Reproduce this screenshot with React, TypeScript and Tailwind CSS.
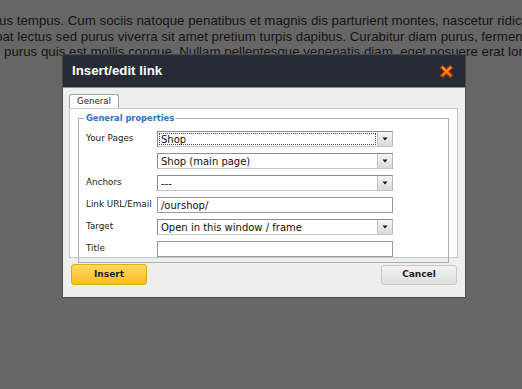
import React from "react";

const formFont = { fontFamily: '"DejaVu Sans", Verdana, sans-serif' };

function Arrow() {
  return (
    <div className="flex h-full w-[15px] items-center justify-center border-l border-[#c2c2c2] bg-gradient-to-b from-[#f7f7f7] to-[#dadada]">
      <svg width="6" height="4" viewBox="0 0 6 4">
        <path d="M0.5 0.5 L5.5 0.5 L3 3.5 Z" fill="#111" />
      </svg>
    </div>
  );
}

function Select({ value, focused }: { value: string; focused?: boolean }) {
  return (
    <div className="flex h-[16px] w-[236px] items-stretch border border-t-[#8c8c8c] border-l-[#8c8c8c] border-r-[#b8b8b8] border-b-[#c4c4c4] bg-white">
      <div className="relative flex flex-1 items-center pl-[3px] text-[10px] text-[#111]" style={formFont}>
        {focused && <div className="absolute inset-[1px] border border-dotted border-[#444]" />}
        <span className="relative">{value}</span>
      </div>
      <Arrow />
    </div>
  );
}

function Input({ value }: { value?: string }) {
  return (
    <div className="flex h-[16px] w-[236px] items-center border border-[#9a9a9a] bg-white pl-[3px] text-[10px] text-[#111]" style={formFont}>
      {value}
    </div>
  );
}

function Row({ label, children }: { label?: string; children: React.ReactNode }) {
  return (
    <div className="flex h-[16px] items-center">
      <div className="w-[71px] text-[8.8px] text-[#222]" style={formFont}>
        {label}
      </div>
      {children}
    </div>
  );
}

function CloseIcon() {
  return (
    <svg width="15" height="15" viewBox="0 0 14 14">
      <defs>
        <linearGradient id="cx" x1="0" y1="0" x2="0" y2="1">
          <stop offset="0" stopColor="#ffb43a" />
          <stop offset="1" stopColor="#ff6400" />
        </linearGradient>
      </defs>
      <path
        d="M1.5 3.5 L3.5 1.5 L7 5 L10.5 1.5 L12.5 3.5 L9 7 L12.5 10.5 L10.5 12.5 L7 9 L3.5 12.5 L1.5 10.5 L5 7 Z"
        fill="url(#cx)"
        stroke="#b8400a"
        strokeWidth="1"
        strokeLinejoin="round"
      />
    </svg>
  );
}

export default function App() {
  const bgFont = { fontFamily: '"Liberation Sans", Arial, sans-serif' };
  return (
    <div className="relative h-[389px] w-[522px] overflow-hidden bg-[#666666]">
      <div className="pt-[13px] text-[13.3px] leading-[15.5px] text-[#151515] whitespace-nowrap" style={bgFont}>
        <div className="ml-[-1px]">us tempus. Cum sociis natoque penatibus et magnis dis parturient montes, nascetur ridiculus mus.</div>
        <div className="ml-[-5px]">pat lectus sed purus viverra sit amet pretium turpis dapibus. Curabitur diam purus, fermentum</div>
        <div className="ml-[4px]">purus quis est mollis congue. Nullam pellentesque venenatis diam, eget posuere erat lorem</div>
      </div>

      <div className="absolute left-[62px] top-[54px] w-[404px] border border-[#4a4a4a] bg-[#eeeeee]">
        <div className="flex h-[33px] items-center justify-between border-b border-[#8e8e8e] bg-[#262b36] pl-[9px] pr-[11px]">
          <span className="text-[13.3px] font-bold text-white" style={bgFont}>
            Insert/edit link
          </span>
          <CloseIcon />
        </div>

        <div className="px-[6px] pt-[6px]">
          <div className="flex">
            <div
              className="flex h-[14px] w-[50px] items-center justify-center rounded-t-[3px] border border-b-0 border-[#94a9b6] bg-white text-[8.6px] text-[#1a1a1a]"
              style={formFont}
            >
              General
            </div>
          </div>
          <div className="mr-px h-[150px] border border-[#c3cbce] bg-white px-[8px] pt-[4px]">
            <fieldset className="h-[150px] border border-[#a9b1b1] pl-[5px] pr-[8px]">
              <legend className="px-[2px] text-[8.3px] font-bold leading-[10px] text-[#2a73c5]" style={formFont}>
                General properties
              </legend>
              <div className="flex flex-col gap-[6px] pl-[2px] pt-[8px]">
                <Row label="Your Pages">
                  <Select value="Shop" focused />
                </Row>
                <Row>
                  <Select value="Shop (main page)" />
                </Row>
                <Row label="Anchors">
                  <Select value="---" />
                </Row>
                <Row label="Link URL/Email">
                  <Input value="/ourshop/" />
                </Row>
                <Row label="Target">
                  <Select value="Open in this window / frame" />
                </Row>
                <Row label="Title">
                  <Input />
                </Row>
              </div>
            </fieldset>
          </div>
        </div>

        <div className="flex items-start justify-between px-[8px] pb-[12px] pt-[6px]">
          <button
            className="h-[21px] w-[76px] rounded-[3px] border border-[#e0a81a] bg-gradient-to-b from-[#ffd85a] to-[#fbbd1d] text-[9px] font-bold text-[#222]"
            style={formFont}
          >
            Insert
          </button>
          <button
            className="mt-px h-[20px] w-[76px] rounded-[3px] border border-[#c9c9c9] bg-gradient-to-b from-[#f2f2f2] to-[#dedede] text-[9px] font-bold text-[#222]"
            style={formFont}
          >
            Cancel
          </button>
        </div>
      </div>
    </div>
  );
}
